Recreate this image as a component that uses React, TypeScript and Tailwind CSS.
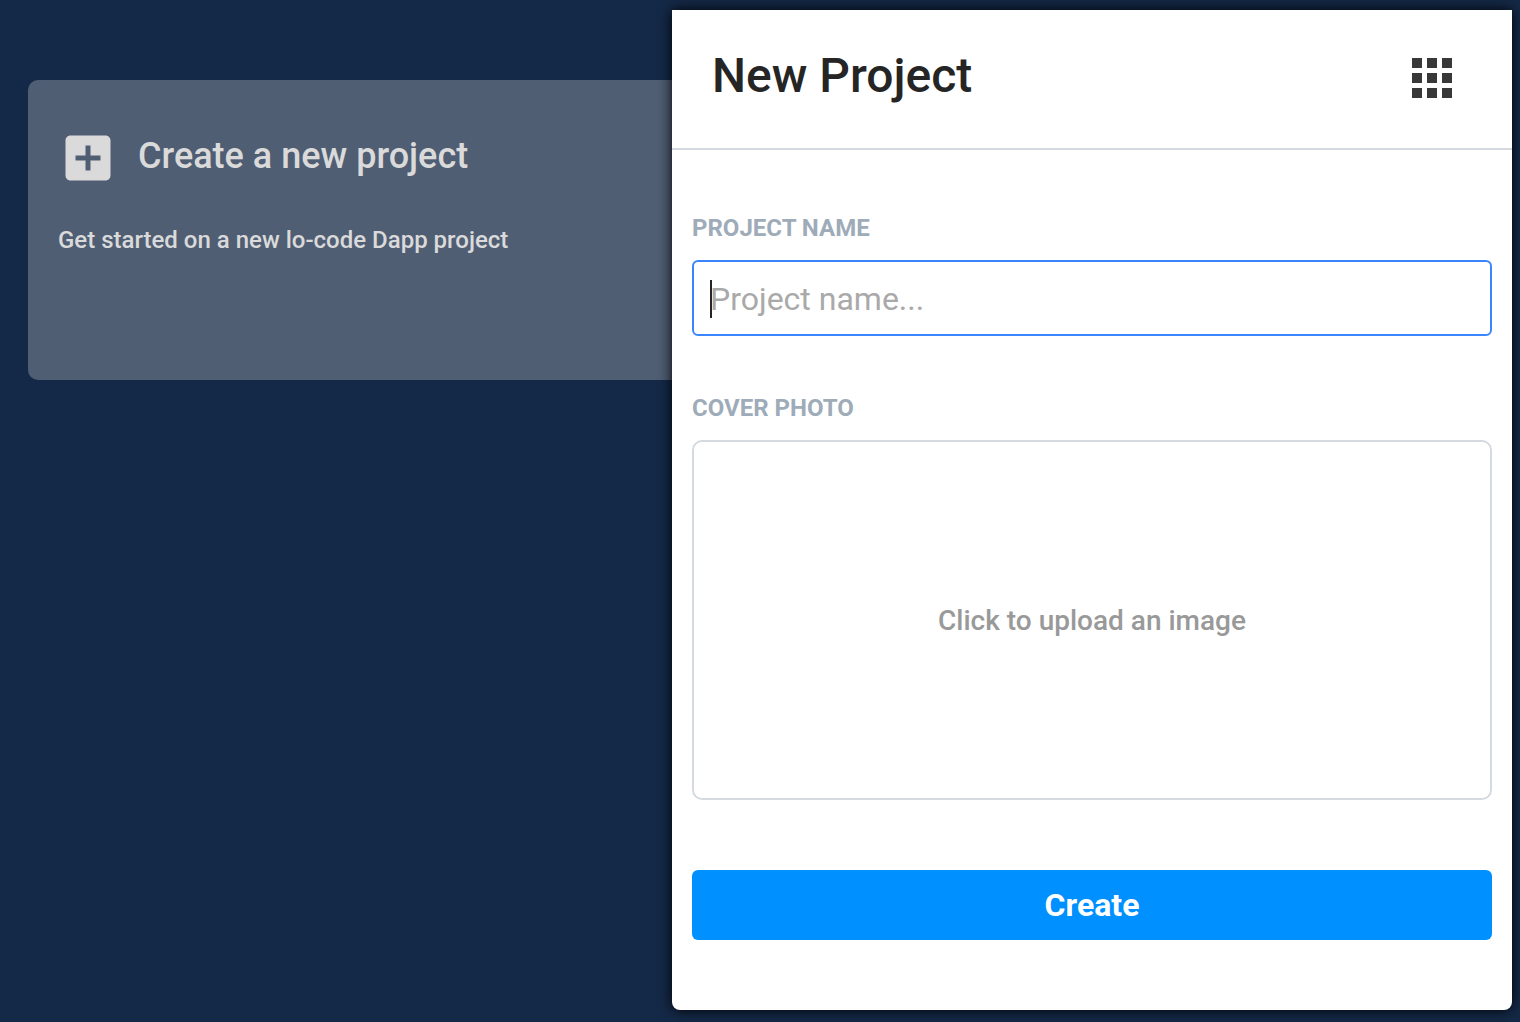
export default function App() {
  return (
    <div className="relative h-[1022px] w-[1520px] overflow-hidden bg-[#142947] font-['Roboto',sans-serif]">
      <main className="pl-7 pt-20">
        <section className="h-[300px] w-[800px] rounded-[10px] bg-[#505e74] text-[#dadada]">
          <div className="flex items-center pl-[30px] pt-12">
            <svg width="60" height="60" viewBox="0 0 24 24" fill="currentColor">
              <path d="M19 3H5c-1.11 0-2 .9-2 2v14c0 1.1.89 2 2 2h14c1.1 0 2-.9 2-2V5c0-1.1-.9-2-2-2zm-2 10h-4v4h-2v-4H7v-2h4V7h2v4h4v2z" />
            </svg>
            <h2 className="mb-1 ml-5 text-[36px] leading-[42px] font-medium">Create a new project</h2>
          </div>
          <p className="ml-[30px] mt-9 text-[24px] leading-8 font-medium">Get started on a new lo-code Dapp project</p>
        </section>
      </main>
      <aside className="absolute left-[672px] top-[10px] flex h-[1000px] w-[840px] flex-col rounded-b-[8px] bg-white shadow-[0_0_14px_#000]">
        <header className="flex h-[140px] items-start justify-between border-b-2 border-[#d5d9e0] pl-10 pr-[50px] pt-[38px]">
          <h1 className="text-[48px] leading-14 font-medium text-[#252525]">New Project</h1>
          <svg width="60" height="60" viewBox="0 0 24 24" fill="#383838">
            <path d="M4 8h4V4H4v4zm6 12h4v-4h-4v4zm-6 0h4v-4H4v4zm0-6h4v-4H4v4zm6 0h4v-4h-4v4zm6-10v4h4V4h-4zm-6 4h4V4h-4v4zm6 6h4v-4h-4v4zm0 6h4v-4h-4v4z" />
          </svg>
        </header>
        <form className="flex flex-col px-5 pt-16" onSubmit={(e) => e.preventDefault()}>
          <label className="text-[24px] leading-7 font-bold text-[#9eabb8]">PROJECT NAME</label>
          <div className="mt-[18px] flex h-[76px] items-center rounded-md border-2 border-[#3b86ff] pt-0.5 pl-4">
            <span className="h-[38px] w-0.5 bg-[#252525]" />
            <span className="-ml-0.5 text-[32px] text-[#a9a9a9]">Project name...</span>
          </div>
          <label className="mt-[58px] text-[24px] leading-7 font-bold text-[#9eabb8]">COVER PHOTO</label>
          <div className="mt-[18px] flex h-[360px] items-center justify-center rounded-[10px] border-2 border-[#d5d9e0] pt-0.5 text-[28px] leading-8 font-medium text-[#999]">Click to upload an image</div>
          <button className="mt-[70px] h-[70px] rounded-md bg-[#0090ff] text-[32px] font-bold text-white">Create</button>
        </form>
      </aside>
    </div>
  );
}
